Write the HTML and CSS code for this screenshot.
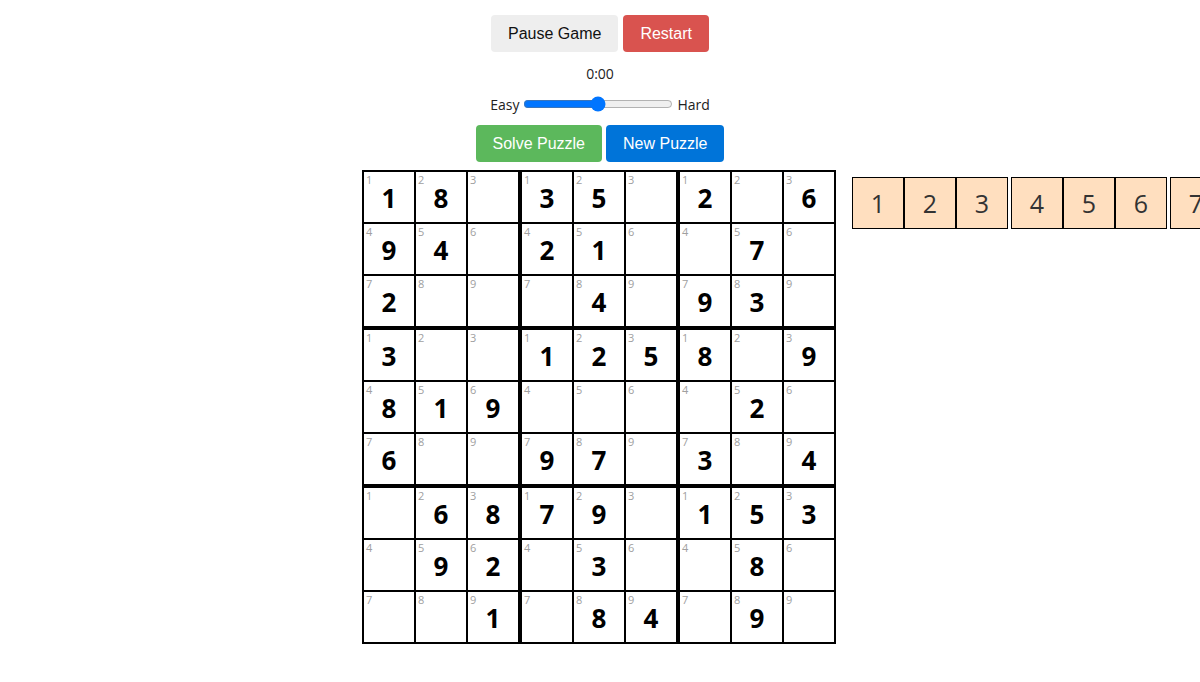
FILE: index.html
```html
<!DOCTYPE html>
<html>
<head>
<meta charset="utf-8">
<title>Sudoku</title>
<link rel="stylesheet" href="styles.css">
</head>
<body>
<div class="app">
  <div class="btn-row row-top">
    <button class="btn btn-pause">Pause Game</button>
    <button class="btn btn-restart">Restart</button>
  </div>
  <div class="timer">0:00</div>
  <div class="difficulty">
    <span>Easy</span>
    <input class="slider" type="range" min="0" max="100" value="50">
    <span>Hard</span>
  </div>
  <div class="btn-row row-bottom">
    <button class="btn btn-solve">Solve Puzzle</button>
    <button class="btn btn-new">New Puzzle</button>
  </div>
  <div class="board-wrap">
    <div class="board">
      <div class="box">
        <div class="cell"><span class="hint">1</span><span class="val">1</span></div>
        <div class="cell"><span class="hint">2</span><span class="val">8</span></div>
        <div class="cell"><span class="hint">3</span></div>
        <div class="cell"><span class="hint">4</span><span class="val">9</span></div>
        <div class="cell"><span class="hint">5</span><span class="val">4</span></div>
        <div class="cell"><span class="hint">6</span></div>
        <div class="cell"><span class="hint">7</span><span class="val">2</span></div>
        <div class="cell"><span class="hint">8</span></div>
        <div class="cell"><span class="hint">9</span></div>
      </div>
      <div class="box">
        <div class="cell"><span class="hint">1</span><span class="val">3</span></div>
        <div class="cell"><span class="hint">2</span><span class="val">5</span></div>
        <div class="cell"><span class="hint">3</span></div>
        <div class="cell"><span class="hint">4</span><span class="val">2</span></div>
        <div class="cell"><span class="hint">5</span><span class="val">1</span></div>
        <div class="cell"><span class="hint">6</span></div>
        <div class="cell"><span class="hint">7</span></div>
        <div class="cell"><span class="hint">8</span><span class="val">4</span></div>
        <div class="cell"><span class="hint">9</span></div>
      </div>
      <div class="box">
        <div class="cell"><span class="hint">1</span><span class="val">2</span></div>
        <div class="cell"><span class="hint">2</span></div>
        <div class="cell"><span class="hint">3</span><span class="val">6</span></div>
        <div class="cell"><span class="hint">4</span></div>
        <div class="cell"><span class="hint">5</span><span class="val">7</span></div>
        <div class="cell"><span class="hint">6</span></div>
        <div class="cell"><span class="hint">7</span><span class="val">9</span></div>
        <div class="cell"><span class="hint">8</span><span class="val">3</span></div>
        <div class="cell"><span class="hint">9</span></div>
      </div>
      <div class="box">
        <div class="cell"><span class="hint">1</span><span class="val">3</span></div>
        <div class="cell"><span class="hint">2</span></div>
        <div class="cell"><span class="hint">3</span></div>
        <div class="cell"><span class="hint">4</span><span class="val">8</span></div>
        <div class="cell"><span class="hint">5</span><span class="val">1</span></div>
        <div class="cell"><span class="hint">6</span><span class="val">9</span></div>
        <div class="cell"><span class="hint">7</span><span class="val">6</span></div>
        <div class="cell"><span class="hint">8</span></div>
        <div class="cell"><span class="hint">9</span></div>
      </div>
      <div class="box">
        <div class="cell"><span class="hint">1</span><span class="val">1</span></div>
        <div class="cell"><span class="hint">2</span><span class="val">2</span></div>
        <div class="cell"><span class="hint">3</span><span class="val">5</span></div>
        <div class="cell"><span class="hint">4</span></div>
        <div class="cell"><span class="hint">5</span></div>
        <div class="cell"><span class="hint">6</span></div>
        <div class="cell"><span class="hint">7</span><span class="val">9</span></div>
        <div class="cell"><span class="hint">8</span><span class="val">7</span></div>
        <div class="cell"><span class="hint">9</span></div>
      </div>
      <div class="box">
        <div class="cell"><span class="hint">1</span><span class="val">8</span></div>
        <div class="cell"><span class="hint">2</span></div>
        <div class="cell"><span class="hint">3</span><span class="val">9</span></div>
        <div class="cell"><span class="hint">4</span></div>
        <div class="cell"><span class="hint">5</span><span class="val">2</span></div>
        <div class="cell"><span class="hint">6</span></div>
        <div class="cell"><span class="hint">7</span><span class="val">3</span></div>
        <div class="cell"><span class="hint">8</span></div>
        <div class="cell"><span class="hint">9</span><span class="val">4</span></div>
      </div>
      <div class="box">
        <div class="cell"><span class="hint">1</span></div>
        <div class="cell"><span class="hint">2</span><span class="val">6</span></div>
        <div class="cell"><span class="hint">3</span><span class="val">8</span></div>
        <div class="cell"><span class="hint">4</span></div>
        <div class="cell"><span class="hint">5</span><span class="val">9</span></div>
        <div class="cell"><span class="hint">6</span><span class="val">2</span></div>
        <div class="cell"><span class="hint">7</span></div>
        <div class="cell"><span class="hint">8</span></div>
        <div class="cell"><span class="hint">9</span><span class="val">1</span></div>
      </div>
      <div class="box">
        <div class="cell"><span class="hint">1</span><span class="val">7</span></div>
        <div class="cell"><span class="hint">2</span><span class="val">9</span></div>
        <div class="cell"><span class="hint">3</span></div>
        <div class="cell"><span class="hint">4</span></div>
        <div class="cell"><span class="hint">5</span><span class="val">3</span></div>
        <div class="cell"><span class="hint">6</span></div>
        <div class="cell"><span class="hint">7</span></div>
        <div class="cell"><span class="hint">8</span><span class="val">8</span></div>
        <div class="cell"><span class="hint">9</span><span class="val">4</span></div>
      </div>
      <div class="box">
        <div class="cell"><span class="hint">1</span><span class="val">1</span></div>
        <div class="cell"><span class="hint">2</span><span class="val">5</span></div>
        <div class="cell"><span class="hint">3</span><span class="val">3</span></div>
        <div class="cell"><span class="hint">4</span></div>
        <div class="cell"><span class="hint">5</span><span class="val">8</span></div>
        <div class="cell"><span class="hint">6</span></div>
        <div class="cell"><span class="hint">7</span></div>
        <div class="cell"><span class="hint">8</span><span class="val">9</span></div>
        <div class="cell"><span class="hint">9</span></div>
      </div>
    </div>
    <div class="palette">
      <div class="pgroup">
        <div class="pcell">1</div><div class="pcell">2</div><div class="pcell">3</div>
      </div>
      <div class="pgroup">
        <div class="pcell">4</div><div class="pcell">5</div><div class="pcell">6</div>
      </div>
      <div class="pgroup">
        <div class="pcell">7</div><div class="pcell">8</div><div class="pcell">9</div>
      </div>
    </div>
  </div>
</div>
</body>
</html>
```

FILE: styles.css
```css
html, body {
  margin: 0;
  padding: 0;
  background: #fff;
  overflow-x: hidden;
}

body {
  font-family: "Open Sans", "Noto Sans", sans-serif;
  color: #222;
}

.app {
  display: flex;
  flex-direction: column;
  align-items: center;
}

.btn-row {
  display: flex;
  gap: 5px;
}

.row-top {
  margin-top: 15px;
}

.row-bottom {
  margin-top: 11px;
  gap: 4px;
}

.btn {
  font-family: "Liberation Sans", Arial, sans-serif;
  font-size: 16px;
  line-height: 17px;
  padding: 10px 17px;
  border: none;
  border-radius: 4px;
  cursor: pointer;
}

.btn-pause {
  background: #eeeeee;
  color: #111;
}

.btn-restart {
  background: #d9534f;
  color: #fff;
}

.btn-solve {
  background: #5cb85c;
  color: #fff;
}

.btn-new {
  background: #0074d9;
  color: #fff;
}

.timer {
  margin-top: 12px;
  font-size: 14px;
  line-height: 20px;
  color: #222;
}

.difficulty {
  margin-top: 10px;
  height: 20px;
  display: flex;
  align-items: center;
  gap: 2px;
  font-size: 14px;
  color: #222;
}

.slider {
  width: 150px;
  margin: 2px;
  accent-color: #0075ff;
}

.board-wrap {
  position: relative;
  margin-top: 8px;
  left: -1px;
}

.board {
  display: grid;
  grid-template-columns: repeat(3, 158px);
  width: 474px;
}

.box {
  display: grid;
  grid-template-columns: repeat(3, 52px);
  grid-auto-rows: 52px;
  border: 1px solid #000;
}

.cell {
  position: relative;
  box-sizing: border-box;
  width: 52px;
  height: 52px;
  border: 1px solid #000;
  display: flex;
  align-items: center;
  justify-content: center;
  background: #fff;
}

.hint {
  position: absolute;
  top: 2px;
  left: 2px;
  font-size: 11px;
  line-height: 12px;
  color: #a0a0a0;
}

.val {
  font-size: 26px;
  font-weight: 700;
  color: #000;
  line-height: 1;
  padding-top: 2px;
}

.palette {
  position: absolute;
  top: 7px;
  left: calc(100% + 16px);
  display: flex;
  gap: 3px;
}

.pgroup {
  display: flex;
}

.pcell {
  box-sizing: border-box;
  width: 52px;
  height: 52px;
  border: 1px solid #000;
  background: #ffdfbf;
  display: flex;
  align-items: center;
  justify-content: center;
  font-size: 25px;
  color: #333;
}
```
